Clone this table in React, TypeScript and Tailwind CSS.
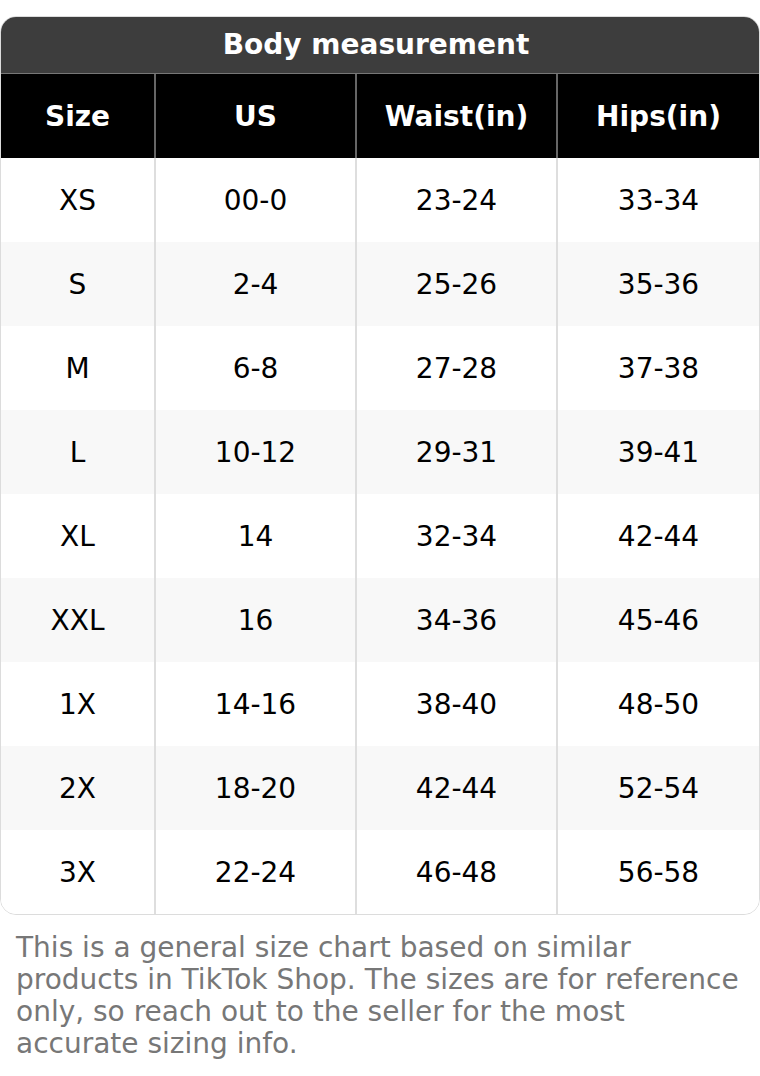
const rows = [
  ["XS", "00-0", "23-24", "33-34"],
  ["S", "2-4", "25-26", "35-36"],
  ["M", "6-8", "27-28", "37-38"],
  ["L", "10-12", "29-31", "39-41"],
  ["XL", "14", "32-34", "42-44"],
  ["XXL", "16", "34-36", "45-46"],
  ["1X", "14-16", "38-40", "48-50"],
  ["2X", "18-20", "42-44", "52-54"],
  ["3X", "22-24", "46-48", "56-58"],
];

const headers = ["Size", "US", "Waist(in)", "Hips(in)"];

export default function App() {
  return (
    <div className="min-h-screen bg-white pt-4 font-['DejaVu_Sans',sans-serif] text-[28px]">
      <div className="overflow-hidden rounded-2xl border border-[#dcdcdc]">
        <div className="flex h-[56px] items-center justify-center bg-[#3d3d3d] pr-2 pb-px font-bold text-white">
          Body measurement
        </div>
        <div className="grid grid-cols-[153px_201px_201px_1fr] border-t border-[#777] bg-black">
          {headers.map((h, i) => (
            <div
              key={h}
              className={`flex h-[84px] items-center justify-center pt-px font-bold text-white ${
                i > 0 ? "border-l-2 border-[#666]" : ""
              }`}
            >
              {h}
            </div>
          ))}
        </div>
        {rows.map((r, ri) => (
          <div
            key={r[0]}
            className={`grid grid-cols-[153px_201px_201px_1fr] ${
              ri % 2 === 1 ? "bg-[#f8f8f8]" : "bg-white"
            }`}
          >
            {r.map((c, i) => (
              <div
                key={i}
                className={`flex h-[84px] items-center justify-center pt-px text-black ${
                  i > 0 ? "border-l-2 border-[#dedede]" : ""
                }`}
              >
                {c}
              </div>
            ))}
          </div>
        ))}
      </div>
      <p className="px-4 pt-[17px] leading-[32px] text-[#777]">
        This is a general size chart based on similar products in TikTok Shop. The sizes are for
        reference only, so reach out to the seller for the most accurate sizing info.
      </p>
    </div>
  );
}
